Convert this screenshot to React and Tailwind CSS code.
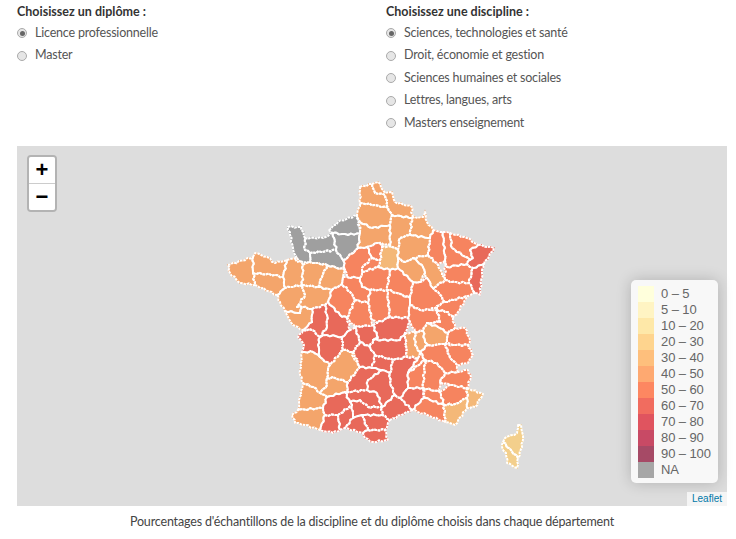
import React from "react";

const O = "#f4a56b"; // 40-50
const S = "#f6845f"; // 50-60
const R = "#e8695a"; // 60-70
const Y = "#f4b878"; // 30-40
const C = "#f3cf8c"; // 20-30
const G = "#9f9f9f"; // NA

// Departments, in page pixels
const departments = [
  // Normandie
  [G, "288,227 301,227 305,238 305,250 310,253 310,262 297,262 293,248 290,235"],
  [G, "305,238 323,238 333,233 336,250 310,253 305,250"],
  [G, "310,253 336,250 343,260 345,270 327,265 310,262"],
  [G, "329,230 338,222 357,215 360,233 348,235 333,233"],
  [G, "333,233 348,235 360,233 358,248 348,257 343,260 336,250"],
  // Bretagne, Pays de la Loire
  [O, "228,265 253,257 253,273 255,285 240,283 230,273"],
  [O, "253,257 255,253 267,257 275,263 287,260 283,277 275,275 253,273"],
  [O, "253,273 275,275 283,277 285,288 277,295 255,285"],
  [O, "287,260 297,258 303,265 302,285 285,288 283,277"],
  [O, "303,265 310,262 327,265 322,277 318,287 302,285"],
  [O, "327,265 345,270 343,277 342,284 332,290 318,287 322,277"],
  [O, "277,295 285,288 302,285 305,295 297,307 302,307 300,313 285,311 280,302"],
  [O, "302,285 318,287 332,290 328,302 325,305 312,309 302,307 297,307 305,295"],
  [O, "285,311 300,313 302,307 312,309 312,322 303,330 293,325 288,317"],
  // Nord
  [O, "360,187 372,184 375,193 385,195 388,208 375,205 360,203"],
  [O, "372,184 378,182 385,193 392,192 395,202 412,207 412,218 392,215 388,208 385,195 375,193"],
  [O, "360,203 375,205 388,208 392,215 390,225 372,228 360,222 357,215"],
  [O, "360,222 372,228 390,225 390,245 378,243 367,247 358,248 360,233"],
  [O, "392,215 412,218 410,235 400,238 398,250 392,247 390,245 390,225"],
  [O, "412,218 423,217 425,212 427,222 433,230 430,238 410,235"],
  [O, "400,238 410,235 430,238 428,255 413,258 405,262 398,258 398,250"],
  [O, "398,258 405,262 413,258 422,265 425,273 420,282 413,282 398,268"],
  [O, "428,255 438,265 445,280 433,288 427,278 425,273 422,265 413,258"],
  [Y, "382,246 392,247 398,250 398,258 398,268 390,270 378,267 380,260"],
  // Est
  [S, "433,230 443,232 445,260 438,265 428,255 430,238"],
  [S, "443,232 450,233 452,248 470,260 467,264 447,267 445,260"],
  [S, "450,233 467,238 478,245 470,250 473,258 470,260 452,248"],
  [R, "470,250 478,245 494,248 484,264 473,268 467,264 470,260 473,258"],
  [R, "473,268 484,264 482,273 480,295 475,293 469,283"],
  [S, "447,267 467,264 473,268 469,283 450,282 445,280 445,260"],
  [S, "445,280 450,282 469,283 475,293 468,296 445,302 438,292 433,288"],
  [S, "445,302 468,296 458,312 453,318 448,312 437,310 437,306"],
  [S, "413,282 420,282 427,278 433,288 438,292 445,302 437,306 430,310 420,310 410,305 410,298"],
  // Centre
  [S, "343,260 348,257 358,248 367,247 372,258 362,268 362,272 360,278 347,277 345,270"],
  [S, "367,247 378,243 382,246 380,260 372,258"],
  [S, "372,258 380,260 378,267 362,272 362,268"],
  [S, "362,272 378,267 390,270 387,290 370,290 362,287 360,278"],
  [S, "390,270 398,268 413,282 410,298 397,293 387,290"],
  [S, "343,277 347,277 360,278 362,287 370,290 368,303 355,300 350,292 342,284"],
  [S, "332,290 342,284 350,292 355,300 347,318 340,315 328,302"],
  [S, "355,300 368,303 372,320 373,325 355,327 347,318"],
  [S, "370,290 387,290 390,317 377,323 372,320 368,303"],
  [S, "387,290 397,293 410,298 410,305 408,318 390,317"],
  [S, "410,305 420,310 430,310 437,310 440,322 427,323 423,331 415,332 410,322 408,318"],
  [S, "437,310 448,312 453,318 455,328 448,333 438,327 427,323 440,322"],
  // Sud-Est
  [O, "427,323 438,327 448,333 447,342 445,344 435,345 428,345 425,342 423,331"],
  [S, "448,333 455,328 465,328 470,340 468,345 453,345 447,342"],
  [S, "445,344 453,345 468,345 473,355 468,363 457,365 450,358"],
  [S, "428,345 435,345 445,344 450,358 457,365 458,372 445,373 437,363 425,360 420,352"],
  [O, "415,332 423,331 425,342 428,345 420,352 415,345"],
  [O, "405,333 415,332 415,345 420,352 418,358 407,357"],
  [S, "418,358 420,352 425,360 408,373"],
  [S, "408,373 425,360 423,388 408,388"],
  [S, "425,360 437,363 445,373 440,382 440,392 423,388"],
  [S, "440,382 445,373 458,372 468,370 471,377 467,388 450,385"],
  [S, "440,392 450,385 467,388 467,398 455,404 444,405"],
  [Y, "467,388 483,394 475,407 467,408 467,398"],
  [Y, "444,405 455,404 467,398 467,408 455,425 445,422"],
  [S, "423,388 440,392 444,405 425,398"],
  [S, "425,398 444,405 445,422 427,415 412,410 424,398"],
  [R, "408,388 423,388 424,398 412,410 400,398"],
  // Massif central, Poitou
  [R, "325,305 328,302 340,315 347,318 350,330 342,337 327,335 320,337 327,327 327,315"],
  [R, "312,309 325,305 327,315 327,327 320,337 312,330 303,330 312,322"],
  [R, "303,330 312,330 320,337 318,345 320,357 313,352 302,352 304,345 298,337"],
  [R, "320,337 327,335 342,337 343,350 330,365 320,357 318,345"],
  [R, "342,337 350,330 355,327 360,342 353,352 343,350"],
  [R, "355,327 373,325 378,338 373,340 370,347 360,342"],
  [R, "373,325 377,323 390,317 408,318 410,322 405,333 400,340 373,340 378,338"],
  [R, "373,340 400,340 405,333 407,357 393,360 375,355 370,347"],
  [R, "353,352 360,342 370,347 375,355 372,368 360,367 352,355"],
  [R, "375,355 393,360 390,373 382,370 372,368"],
  [R, "393,360 407,357 418,358 408,373 408,388 400,398 395,395 390,383 390,373"],
  [R, "360,367 372,368 382,370 368,380 367,390 347,392 348,382"],
  [R, "382,370 390,373 390,383 395,395 382,407 377,393 367,390 368,380"],
  [R, "395,395 400,398 412,410 390,420 382,415 382,407"],
  [R, "347,392 367,390 377,393 382,407 368,407 360,400 350,402 345,392"],
  [R, "360,400 368,407 382,407 382,415 362,415 353,418 352,405 350,402"],
  [R, "362,415 382,415 390,420 385,430 368,430"],
  [R, "353,418 362,415 368,430 363,433 345,428"],
  [R, "368,430 385,430 388,440 373,442 365,438 363,433"],
  [R, "327,397 345,392 350,402 352,405 338,415 325,415 323,408"],
  [R, "338,415 352,405 353,418 345,428 340,430"],
  [R, "325,415 338,415 340,430 333,433 320,430"],
  // Sud-Ouest
  [O, "328,370 330,365 343,350 353,352 360,367 348,382 335,378 327,378"],
  [O, "302,352 313,352 320,357 330,365 328,370 327,378 327,385 320,393 313,387 303,383 300,375"],
  [O, "327,378 335,378 348,382 347,392 345,392 327,397 320,393 327,385"],
  [O, "303,383 313,387 320,393 327,397 323,408 298,410 300,397"],
  [O, "292,415 298,410 323,408 325,415 320,430 305,425 295,423"],
  // Corse
  [C, "518,425 521,425 523,435 522,447 518,458 503,442 505,438 517,433"],
  [C, "503,442 518,458 517,468 507,463 506,453 502,447"],
];

// same wobble on both sides of a shared border
function wobble(a, b) {
  const flip = a[0] > b[0] || (a[0] === b[0] && a[1] > b[1]);
  const [p, q] = flip ? [b, a] : [a, b];
  const len = Math.hypot(q[0] - p[0], q[1] - p[1]);
  const n = Math.max(1, Math.round(len / 3));
  const nx = (q[1] - p[1]) / len;
  const ny = (p[0] - q[0]) / len;
  const seed = p[0] * 7 + p[1] * 13 + q[0] * 17 + q[1] * 23;
  const pts = [];
  for (let i = 1; i < n; i++) {
    const off = Math.sin(seed + i * 2.4) * 0.9;
    pts.push([p[0] + ((q[0] - p[0]) * i) / n + nx * off, p[1] + ((q[1] - p[1]) * i) / n + ny * off]);
  }
  return flip ? pts.reverse() : pts;
}

function toPath(str) {
  const pts = str.split(" ").map((s) => s.split(",").map(Number));
  let out = [];
  pts.forEach((pt, i) => {
    out.push(pt);
    out = out.concat(wobble(pt, pts[(i + 1) % pts.length]));
  });
  return "M" + out.map((p) => p[0].toFixed(1) + " " + p[1].toFixed(1)).join("L") + "Z";
}

const shapes = departments.map(([color, pts]) => ({ color, d: toPath(pts) }));

const legend = [
  ["#ffffdc", "0 – 5"],
  ["#fff4c3", "5 – 10"],
  ["#fee8a8", "10 – 20"],
  ["#fed48e", "20 – 30"],
  ["#febf7c", "30 – 40"],
  ["#fea971", "40 – 50"],
  ["#fd8761", "50 – 60"],
  ["#f16c5f", "60 – 70"],
  ["#e0545f", "70 – 80"],
  ["#c84a65", "80 – 90"],
  ["#a64a66", "90 – 100"],
  ["#a6a6a6", "NA"],
];

function Radio({ label, checked }) {
  return (
    <div className="flex h-[22.5px] items-center text-[12.5px] tracking-[-0.2px] text-[#555]">
      <span className="mr-[8px] flex h-[10px] w-[10px] items-center justify-center rounded-full border border-[#aaa] bg-[#e6e6e6]">
        {checked && <span className="h-[5px] w-[5px] rounded-full bg-[#666]" />}
      </span>
      {label}
    </div>
  );
}

function Group({ title, options }) {
  return (
    <div>
      <div className="h-[22px] pt-[3px] text-[12.5px] leading-[18px] font-bold text-[#333]">{title}</div>
      {options.map((o, i) => (
        <Radio key={o} label={o} checked={i === 0} />
      ))}
    </div>
  );
}

function FranceMap() {
  return (
    <svg className="h-full w-full" viewBox="17 146 710 360">
      {shapes.map((s, i) => (
        <path key={i} d={s.d} fill={s.color} stroke={s.color} strokeWidth="1.5" />
      ))}
      {shapes.map((s, i) => (
        <path key={i} d={s.d} fill="none" stroke="#fff" strokeWidth="2" strokeDasharray="2.6 0.8" strokeLinejoin="round" />
      ))}
    </svg>
  );
}

export default function App() {
  return (
    <div className="h-[539px] w-[736px] overflow-hidden bg-white font-['Lato','Liberation_Sans',sans-serif]">
      <div className="grid h-[146px] grid-cols-[369px_1fr] pl-[17px]">
        <Group title="Choisissez un diplôme :" options={["Licence professionnelle", "Master"]} />
        <Group
          title="Choisissez une discipline :"
          options={[
            "Sciences, technologies et santé",
            "Droit, économie et gestion",
            "Sciences humaines et sociales",
            "Lettres, langues, arts",
            "Masters enseignement",
          ]}
        />
      </div>

      <div className="relative ml-[17px] h-[360px] w-[710px] bg-[#ddd]">
        <FranceMap />

        {/* zoom control */}
        <div className="absolute top-[9px] left-[10px] rounded-[4px] border-2 border-[#b3b3b3] bg-clip-padding font-['Liberation_Sans',sans-serif] text-[22px] leading-[26px] font-bold text-black">
          <div className="h-[27px] w-[26px] rounded-t-[2px] border-b border-[#ccc] bg-white text-center">+</div>
          <div className="h-[26px] w-[26px] rounded-b-[2px] bg-white text-center">−</div>
        </div>

        {/* legend */}
        <div className="absolute top-[134px] left-[614px] w-[87px] rounded-[5px] bg-[#f8f8f8] pt-[6px] pr-[6px] pb-[5px] pl-[7px] font-['Liberation_Sans',sans-serif] text-[13px] leading-[16px] tracking-[-0.1px] text-[#666] shadow-[0_0_15px_rgba(0,0,0,0.2)]">
          {legend.map(([color, label]) => (
            <div key={label} className="flex h-[16px] items-center whitespace-nowrap">
              <span className="mr-[7px] h-[16px] w-[16px] shrink-0" style={{ backgroundColor: color }} />
              {label}
            </div>
          ))}
        </div>

        {/* attribution */}
        <div className="absolute right-0 bottom-0 bg-white/70 px-[5px] font-['Liberation_Sans',sans-serif] text-[10px] leading-[14px] text-[#0078a8]">
          Leaflet
        </div>
      </div>

      <div className="mt-[8px] pl-[8px] text-center text-[12.5px] leading-[16px] tracking-[-0.17px] text-[#444]">
        Pourcentages d'échantillons de la discipline et du diplôme choisis dans chaque département
      </div>
    </div>
  );
}
